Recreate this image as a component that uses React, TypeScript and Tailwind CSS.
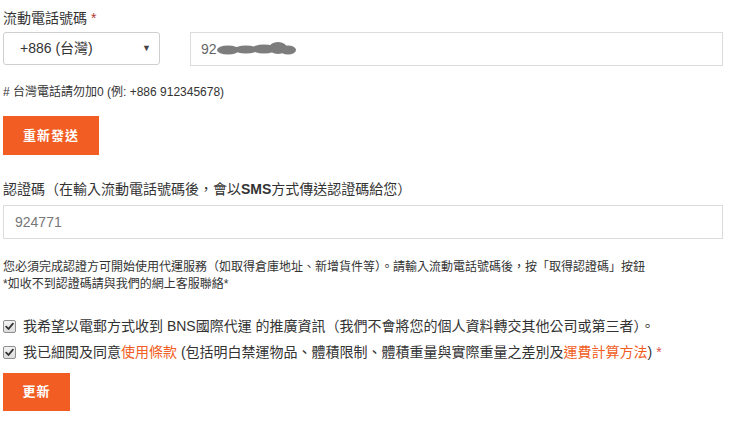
import React from "react";

function Check() {
  return (
    <span className="inline-flex h-[13px] w-[13px] shrink-0 items-center justify-center rounded-[2px] border border-[#8f8f8f] bg-gradient-to-b from-[#f4f4f4] to-[#dcdcdc]">
      <svg width="9" height="9" viewBox="0 0 9 9">
        <path d="M1.2 4.6 L3.5 7 L7.9 1.6" fill="none" stroke="#333" strokeWidth="1.8" strokeLinecap="round" strokeLinejoin="round" />
      </svg>
    </span>
  );
}

function Blob() {
  return (
    <svg width="82" height="18" viewBox="0 0 82 18" className="ml-[-1px]">
      <defs>
        <filter id="bl" x="-10%" y="-40%" width="120%" height="180%">
          <feGaussianBlur stdDeviation="0.7" />
        </filter>
      </defs>
      <g fill="#7d7d7d" filter="url(#bl)">
        <ellipse cx="12" cy="10" rx="11" ry="4.5" />
        <ellipse cx="30" cy="9.5" rx="12" ry="4" />
        <ellipse cx="48" cy="9" rx="12" ry="4.5" />
        <ellipse cx="62" cy="8" rx="9" ry="6" />
        <ellipse cx="72" cy="10" rx="8" ry="4.5" />
      </g>
    </svg>
  );
}

export default function App() {
  return (
    <div
      className="w-[734px] h-[425px] bg-white pl-[3px] pt-[8px] text-[#333]"
      style={{ fontFamily: '"Liberation Sans", Arial, "Noto Sans CJK TC", sans-serif' }}
    >
      <div className="w-[720px]">
        <div className="text-[14px] leading-[20px]">
          流動電話號碼 <span className="text-[#b03a36]">*</span>
        </div>
        <div className="mt-[4px] flex items-start">
          <div className="flex h-[33px] w-[157px] items-center justify-between rounded-[3px] border border-[#cfcfcf] pl-[16px] pr-[8px] text-[14px] text-[#333]">
            <span>+886 (台灣)</span>
            <span className="text-[9px] text-[#444]">▼</span>
          </div>
          <div className="ml-[30px] flex h-[34px] flex-1 items-center border border-[#dcdcdc] pl-[10px] text-[14px] text-[#666]">
            <span>92</span>
            <Blob />
          </div>
        </div>
        <div className="mt-[18px] text-[12px] leading-[16px]">
          # 台灣電話請勿加0 (例: +886 912345678)
        </div>
        <button className="mt-[16px] flex h-[39px] w-[96px] items-center justify-center bg-[#f15d22] text-[13px] font-bold tracking-[1px] text-white">
          重新發送
        </button>
        <div className="mt-[24px] text-[14px] leading-[20px]">
          認證碼（在輸入流動電話號碼後，會以<b>SMS</b>方式傳送認證碼給您）
        </div>
        <div className="mt-[6px] flex h-[34px] items-center border border-[#dcdcdc] pl-[11px] text-[14px] text-[#777]">
          924771
        </div>
        <div className="mt-[20px] text-[12px] leading-[17px]">
          您必須完成認證方可開始使用代運服務（如取得倉庫地址、新增貨件等）。請輸入流動電話號碼後，按「取得認證碼」按鈕
        </div>
        <div className="text-[12px] leading-[17px]">*如收不到認證碼請與我們的網上客服聯絡*</div>
        <div className="mt-[20px] flex h-[26px] items-center gap-[7px] text-[14px]">
          <Check />
          <span>我希望以電郵方式收到 BNS國際代運 的推廣資訊（我們不會將您的個人資料轉交其他公司或第三者）。</span>
        </div>
        <div className="flex h-[26px] items-center gap-[7px] text-[14px]">
          <Check />
          <span>
            我已細閱及同意<span className="text-[#f15d22]">使用條款</span> (包括明白禁運物品、體積限制、體積重量與實際重量之差別及<span className="text-[#f15d22]">運費計算方法</span>) <span className="text-[#d9534f]">*</span>
          </span>
        </div>
        <button className="mt-[8px] flex h-[38px] w-[67px] items-center justify-center bg-[#f15d22] text-[13px] font-bold tracking-[1px] text-white">
          更新
        </button>
      </div>
    </div>
  );
}
